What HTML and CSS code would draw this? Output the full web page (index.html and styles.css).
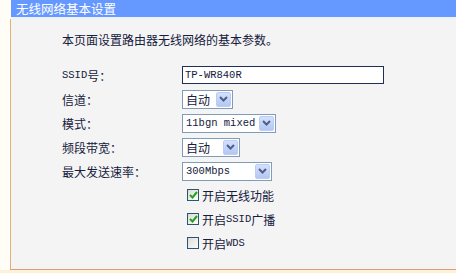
FILE: index.html
```html
<!DOCTYPE html>
<html lang="zh-CN">
<head>
    <meta charset="UTF-8">
    <title>无线网络基本设置</title>
    <link rel="stylesheet" href="styles.css">
</head>
<body>
    <div class="title">无线网络基本设置</div>
    <div class="panel">
        <p class="intro">本页面设置路由器无线网络的基本参数。</p>
        <div class="form">
            <div class="label"><span class="mono">SSID</span>号：</div>
            <div class="field"><span class="textbox">TP-WR840R</span></div>

            <div class="label">信道：</div>
            <div class="field">
                <span class="select w-channel"><span class="value">自动</span><span class="arrow"><svg width="9" height="6" viewBox="0 0 9 6"><path d="M1 1 L4.5 4.5 L8 1" fill="none" stroke="#4d6185" stroke-width="2"/></svg></span></span>
            </div>

            <div class="label">模式：</div>
            <div class="field">
                <span class="select w-mode"><span class="value mono">11bgn mixed</span><span class="arrow"><svg width="9" height="6" viewBox="0 0 9 6"><path d="M1 1 L4.5 4.5 L8 1" fill="none" stroke="#4d6185" stroke-width="2"/></svg></span></span>
            </div>

            <div class="label">频段带宽：</div>
            <div class="field">
                <span class="select w-band"><span class="value">自动</span><span class="arrow"><svg width="9" height="6" viewBox="0 0 9 6"><path d="M1 1 L4.5 4.5 L8 1" fill="none" stroke="#4d6185" stroke-width="2"/></svg></span></span>
            </div>

            <div class="label">最大发送速率：</div>
            <div class="field">
                <span class="select w-rate"><span class="value mono">300Mbps</span><span class="arrow"><svg width="9" height="6" viewBox="0 0 9 6"><path d="M1 1 L4.5 4.5 L8 1" fill="none" stroke="#4d6185" stroke-width="2"/></svg></span></span>
            </div>

            <div class="label"></div>
            <div class="field check"><span class="box checked"><svg width="9" height="8" viewBox="0 0 9 8"><path d="M1 4 L3.5 6.5 L8 1" fill="none" stroke="#22a122" stroke-width="2"/></svg></span>开启无线功能</div>

            <div class="label"></div>
            <div class="field check"><span class="box checked"><svg width="9" height="8" viewBox="0 0 9 8"><path d="M1 4 L3.5 6.5 L8 1" fill="none" stroke="#22a122" stroke-width="2"/></svg></span>开启<span class="mono">SSID</span>广播</div>

            <div class="label"></div>
            <div class="field check"><span class="box"></span>开启<span class="mono">WDS</span></div>
        </div>
    </div>
    <div class="foot"></div>
</body>
</html>
```

FILE: styles.css
```css
body {
    margin: 0;
    background: #fffdf6;
    font-family: "Noto Sans CJK SC", sans-serif;
    font-size: 12px;
    color: #14203c;
}
.title {
    margin-left: 11px;
    height: 17px;
    line-height: 17px;
    padding-left: 5px;
    background: #6699ff;
    color: #fff;
    font-size: 12.5px;
    border-bottom: 2px solid #eef3fb;
}
.panel {
    margin-left: 10px;
    border-left: 1px solid #e6b070;
    border-bottom: 1px solid #dca070;
    background: #f4f4f4;
    height: 250px;
    padding-left: 51px;
}
.intro {
    margin: 0;
    padding-top: 14px;
    line-height: 14px;
}
.form {
    margin-top: 16px;
    display: grid;
    grid-template-columns: 120px 1fr;
    grid-auto-rows: 24px;
}
.label {
    display: flex;
    align-items: center;
}
.field {
    display: flex;
    align-items: center;
}
.mono {
    font-family: "Liberation Mono", monospace;
    font-size: 10.5px;
}
.textbox {
    box-sizing: border-box;
    width: 202px;
    height: 18px;
    line-height: 16px;
    border: 1px solid #1e3058;
    background: #fff;
    padding-left: 2px;
    font-family: "Liberation Mono", monospace;
    font-size: 10.5px;
}
.select {
    box-sizing: border-box;
    height: 19px;
    display: flex;
    align-items: center;
    border: 1px solid #7f9db9;
    background: #fff;
    padding: 1px;
}
.select .value {
    flex: 1;
    padding-left: 2px;
    line-height: 15px;
}
.select .arrow {
    width: 15px;
    height: 15px;
    box-sizing: border-box;
    border: 1px solid #bccdf5;
    border-radius: 2px;
    background: linear-gradient(#d4e0fd, #b3c7f3);
    display: flex;
    align-items: center;
    justify-content: center;
}
.w-channel { width: 51px; }
.w-mode { width: 94px; }
.w-band { width: 58px; }
.w-rate { width: 90px; }
.check {
    padding-left: 5px;
}
.box {
    box-sizing: border-box;
    width: 12px;
    height: 12px;
    border: 1px solid #2b5477;
    background: linear-gradient(135deg, #dcdcd6, #fbfbfa);
    margin-right: 3px;
    display: flex;
    align-items: center;
    justify-content: center;
}
.foot {
    height: 3px;
    background: #fdf0dc;
}
```
